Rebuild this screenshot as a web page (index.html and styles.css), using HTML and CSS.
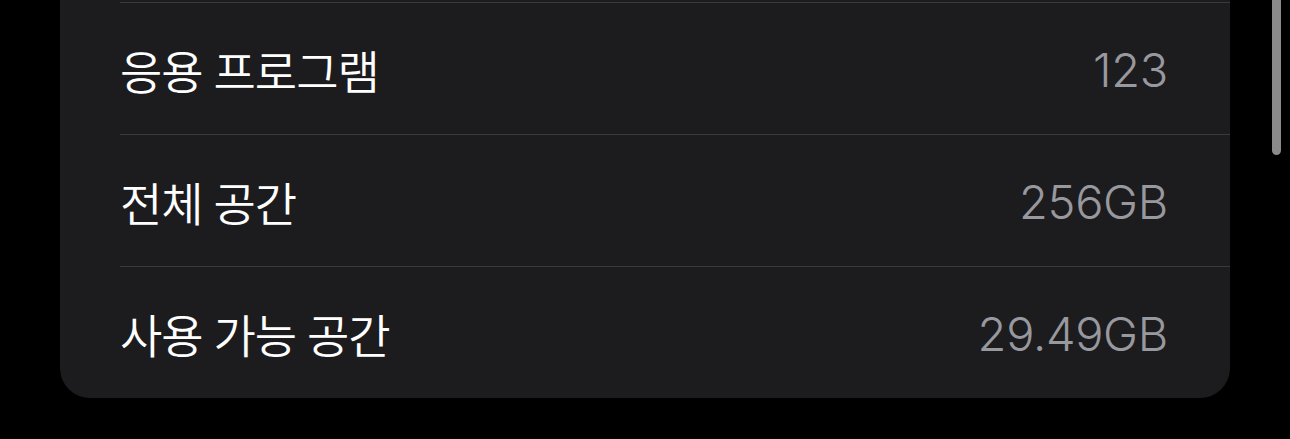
FILE: index.html
```html
<!DOCTYPE html>
<html lang="ko">
<head>
<meta charset="utf-8">
<link rel="stylesheet" href="styles.css">
</head>
<body>
<div class="screen">
  <div class="card">
    <div class="row">
      <span class="label">응용 프로그램</span>
      <span class="value">123</span>
    </div>
    <div class="row">
      <span class="label">전체 공간</span>
      <span class="value">256GB</span>
    </div>
    <div class="row">
      <span class="label">사용 가능 공간</span>
      <span class="value">29.49GB</span>
    </div>
  </div>
  <div class="scrollbar"></div>
</div>
</body>
</html>
```
FILE: styles.css
```css
html, body {
  margin: 0;
  padding: 0;
  background: #000;
  overflow: hidden;
}
.screen {
  position: relative;
  width: 1290px;
  height: 439px;
  overflow: hidden;
}
.card {
  margin-top: -40px;
  margin-left: 60px;
  width: 1170px;
  padding-top: 42px;
  background: #1c1c1e;
  border-radius: 30px;
  box-sizing: border-box;
}
.row {
  margin-left: 60px;
  padding-right: 62px;
  height: 132px;
  box-sizing: border-box;
  border-top: 1px solid #3a3a3c;
  display: flex;
  align-items: center;
  justify-content: space-between;
}
.label {
  font-family: "Noto Sans CJK KR", "Noto Sans", sans-serif;
  font-size: 46px;
  font-weight: 350;
  letter-spacing: -1px;
  word-spacing: -1px;
  color: #fff;
  line-height: 1;
}
.value {
  font-family: Inter, "Noto Sans", sans-serif;
  font-size: 47px;
  font-weight: 350;
  letter-spacing: -0.3px;
  color: #98989f;
  line-height: 1;
  padding-top: 2px;
}
.scrollbar {
  position: absolute;
  left: 1272px;
  top: -10px;
  width: 9px;
  height: 165px;
  border-radius: 5px;
  background: #8a8a8a;
}
```
